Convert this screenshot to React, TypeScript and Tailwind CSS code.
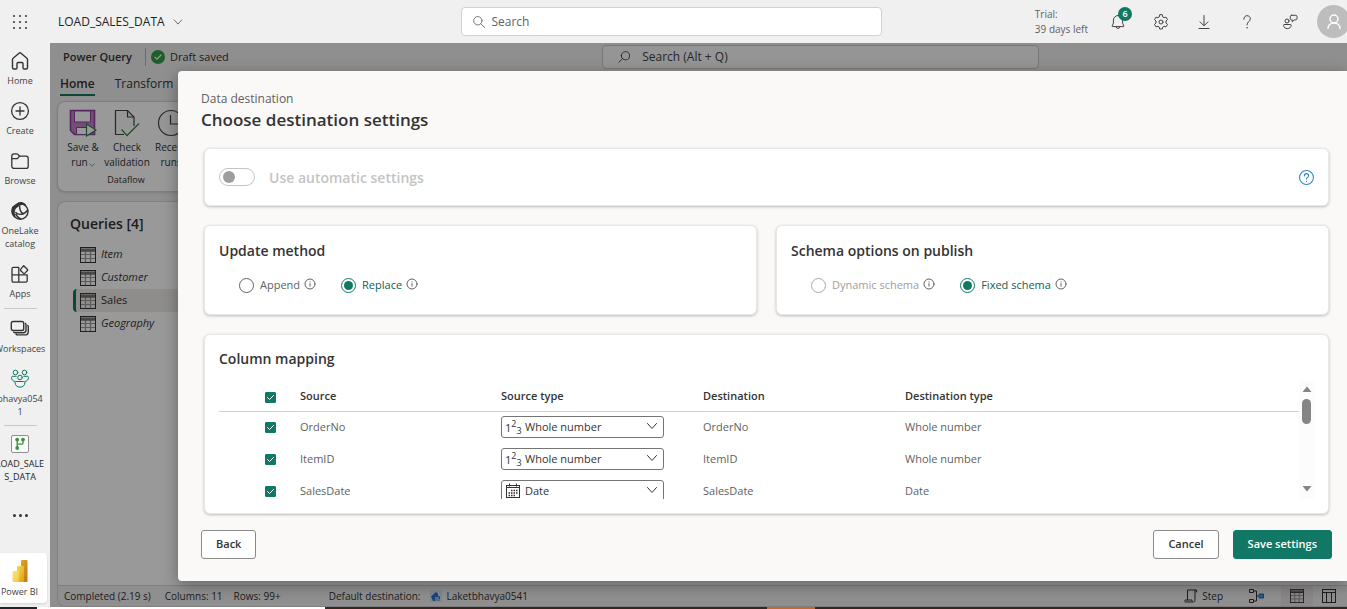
import React from "react";
import type { ReactNode } from "react";

type IconProps = { className?: string };

function Svg({ className = "size-5", box = 20, children }: { className?: string; box?: number; children: ReactNode }) {
  return (
    <svg
      viewBox={`0 0 ${box} ${box}`}
      className={className}
      fill="none"
      stroke="currentColor"
      strokeWidth="1"
      strokeLinecap="round"
      strokeLinejoin="round"
      aria-hidden="true"
    >
      {children}
    </svg>
  );
}

const ChevronDown = ({ className }: IconProps) => (
  <Svg className={className} box={12}>
    <path d="M1.500 3.500 6 8.500l4.500-5" />
  </Svg>
);

const SearchIcon = ({ className }: IconProps) => (
  <Svg className={className} box={16}>
    <circle cx="7" cy="6.500" r="5" />
    <path d="m10.600 10.200 4.400 4.300" />
  </Svg>
);

const HomeIcon = () => (
  <Svg>
    <path strokeWidth="1.400" d="M2.500 8.600c0-.5.2-1 .6-1.300L9 2.200a1.500 1.500 0 0 1 2 0l5.900 5.100c.4.300.6.800.6 1.300v8.200c0 .700-.5 1.200-1.200 1.200h-2.100c-.700 0-1.200-.5-1.200-1.200v-4.300a1 1 0 0 0-1-1H8a1 1 0 0 0-1 1v4.300c0 .700-.5 1.200-1.200 1.200H3.700c-.700 0-1.200-.5-1.200-1.200z" />
  </Svg>
);

const CreateIcon = () => (
  <Svg>
    <circle cx="10" cy="10" r="8.400" strokeWidth="1.300" />
    <path strokeWidth="1.300" d="M10 6v8M6 10h8" />
  </Svg>
);

const BrowseIcon = () => (
  <Svg>
    <path strokeWidth="1.300" d="M1.800 5c0-1.200 1-2.200 2.200-2.200h2.600c.5 0 .9.200 1.200.5l1.700 1.800H16c1.200 0 2.200 1 2.200 2.200v7.900c0 1.200-1 2.200-2.200 2.200H4c-1.200 0-2.200-1-2.200-2.200z" />
    <path strokeWidth="1.300" d="M2 7.700h4.600c.5 0 .9-.2 1.200-.5l1.700-2" />
  </Svg>
);

const OneLakeIcon = () => (
  <Svg>
    <circle cx="10.300" cy="10.500" r="7.700" strokeWidth="1.400" />
    <path
      fill="currentColor"
      stroke="none"
      d="M6.800 2.400C8.600 1 11 .7 13 1.500c1.600.6 2.800 1.600 3.500 2.900-2.200-1-4.800-.9-7 .4L6.200 7.200c-1.400 1.600-1.900 4-1.200 6.600l.6 3.400C2.800 15.600 1.300 13 1.200 10.200c0-1.800.5-3.400 1.300-4.700z"
    />
    <path strokeWidth="1.400" d="M9.700 5.200c-.2 3 .9 5.800 3.600 7.800M5.800 11.500c2.500 3 8.500 2.600 12-2.500M5.800 13.500c1 1.500 2.500 3.200 4.600 4.300" />
  </Svg>
);

const AppsIcon = () => (
  <Svg>
    <path strokeWidth="1.300" d="M2 4.800c0-.8.600-1.400 1.400-1.400h5.400v14.800H3.400c-.8 0-1.400-.6-1.400-1.400zM2 10.800h15.200v6c0 .8-.6 1.400-1.400 1.400H8.800" />
    <path strokeWidth="1.300" d="m13.700 1.700 3.800 3.800c.3.300.3.700 0 1l-2.900 2.900c-.3.300-.8.300-1.100 0l-2.900-2.900a.8.800 0 0 1 0-1.100z" />
  </Svg>
);

const WorkspacesIcon = () => (
  <Svg>
    <rect x="1.300" y="2.500" width="12.400" height="9" rx="1.800" strokeWidth="1.400" />
    <path strokeWidth="1.400" d="M15.500 4.400c.3.400.5.900.5 1.400V11c0 1.700-1 2.700-2.700 2.700H5.200c-.6 0-1.100-.2-1.500-.5M17.800 6.400c.3.400.5.900.5 1.400v4.600c0 2.100-1.400 3.500-3.500 3.500H7.600c-.6 0-1.100-.2-1.500-.5" />
  </Svg>
);

const TeamIcon = () => (
  <Svg className="size-5 text-[#117865]">
    <circle cx="5.500" cy="3.500" r="2.300" />
    <circle cx="14.500" cy="3.500" r="2.300" />
    <circle cx="10" cy="8.500" r="2.300" />
    <path d="M6.200 7.300H2.700c-.7 0-1.200.5-1.200 1.200 0 2 1.200 3.700 3.400 4M13.800 7.300h3.500c.7 0 1.200.5 1.200 1.200 0 2-1.200 3.700-3.400 4M6.300 12.500h7.400c.7 0 1.200.5 1.200 1.200 0 2.600-2 4.500-4.900 4.500s-4.900-1.900-4.900-4.500c0-.7.5-1.200 1.200-1.200z" />
  </Svg>
);

const DataflowIcon = () => (
  <Svg>
    <rect x="1.500" y="1.500" width="17" height="17" rx="1.500" fill="#fafafa" stroke="#8f8f8f" />
    <path stroke="#3f9142" strokeWidth="1.300" d="M7.200 6v8M13 6v3c0 .7-.5 1.200-1.200 1.200H7.200" />
    <g fill="#3f9142" stroke="none">
      <circle cx="7.200" cy="5.600" r="1.900" />
      <circle cx="13" cy="5.600" r="1.900" />
      <circle cx="7.200" cy="14" r="1.900" />
    </g>
  </Svg>
);

const PowerBiIcon = () => (
  <svg viewBox="0 0 20 24" className="h-6 w-5" aria-hidden="true">
    <defs>
      <linearGradient id="pbiBack" x1="0" y1="0" x2="1" y2="1">
        <stop offset="0" stopColor="#e3a82b" />
        <stop offset="1" stopColor="#b87710" />
      </linearGradient>
      <linearGradient id="pbiMid" x1="0" y1="0" x2="1" y2="1">
        <stop offset="0" stopColor="#f6d751" />
        <stop offset="1" stopColor="#dfa012" />
      </linearGradient>
      <linearGradient id="pbiFront" x1="0" y1="0" x2="1" y2="1">
        <stop offset="0" stopColor="#f9e589" />
        <stop offset="1" stopColor="#f0c93c" />
      </linearGradient>
    </defs>
    <rect x="11" y="1" width="6.500" height="22" rx="1" fill="url(#pbiBack)" />
    <path d="M7 8a1 1 0 0 1 1-1h5a1 1 0 0 1 1 1v15H7z" fill="url(#pbiMid)" />
    <path d="M2.500 13a1 1 0 0 1 1-1H8a1 1 0 0 1 1 1v10H3.500a1 1 0 0 1-1-1z" fill="url(#pbiFront)" />
  </svg>
);

const WaffleIcon = () => (
  <svg viewBox="0 0 16 16" className="size-4" fill="#444" aria-hidden="true">
    {[2, 8, 14].map((y) => [2, 8, 14].map((x) => <circle key={`${x}-${y}`} cx={x} cy={y} r="1.100" />))}
  </svg>
);

const BellIcon = () => (
  <Svg className="size-4" box={16}>
    <path d="M8 1.500a4.600 4.600 0 0 0-4.600 4.600v3L2.100 12c-.1.300.1.600.4.600h11c.3 0 .5-.3.400-.6l-1.300-2.900v-3A4.600 4.600 0 0 0 8 1.500zM6.200 12.700a1.800 1.800 0 0 0 3.600 0" />
  </Svg>
);

const GearIcon = () => (
  <Svg className="size-4" box={16}>
    <circle cx="8" cy="8" r="2" />
    <path d="m6.700 1-.4 1.900-1.400.8-1.900-.6L1.500 5.600 3 7v2l-1.500 1.400L3 12.900l1.900-.6 1.400.8.4 1.900h2.600l.4-1.900 1.400-.8 1.900.6 1.500-2.500L13 9V7l1.500-1.400L13 3.100l-1.900.6-1.400-.8L9.300 1z" />
  </Svg>
);

const DownloadIcon = () => (
  <Svg className="size-4" box={16}>
    <path d="M8 1.500v10M4 7.800l4 4 4-4M3 14.500h10" />
  </Svg>
);

const HelpIcon = () => (
  <Svg className="size-4" box={16}>
    <path d="M4.800 5.300c0-2.100 1.400-3.600 3.300-3.600s3.200 1.400 3.200 3.200C11.300 7.500 8 7.700 8 10.800" />
    <circle cx="8" cy="13.800" r=".4" fill="currentColor" strokeWidth=".5" />
  </Svg>
);

const FeedbackIcon = () => (
  <Svg className="size-4" box={16}>
    <circle cx="5" cy="7" r="2" />
    <path d="M2.500 10.500h6c.5 0 .8.400.7.900-.3 2-1.700 3.200-3.900 3.200-2.100 0-3.500-1.200-3.800-3.200-.1-.5.300-.9 1-.900zM9.500 1.300h4.300c.7 0 1.200.5 1.200 1.200v2.200c0 .7-.5 1.200-1.200 1.200h-1.500l-2 1.900V5.900h-.8c-.7 0-1.200-.5-1.200-1.200V2.500c0-.7.500-1.200 1.200-1.200z" />
  </Svg>
);

const PersonIcon = () => (
  <Svg className="size-5" box={20}>
    <circle cx="10" cy="7" r="4" strokeWidth="1.400" />
    <path strokeWidth="1.400" d="M4 16.500c0-3.300 2.500-5.500 6-5.500s6 2.200 6 5.500" />
  </Svg>
);

const InfoIcon = () => (
  <Svg className="size-3 text-[#616161]" box={12}>
    <circle cx="6" cy="6" r="5" />
    <path strokeLinecap="butt" d="M6 5.200v3.300M6 3.300v1" />
  </Svg>
);

const GridIcon = ({ className = "size-4" }: IconProps) => (
  <Svg className={className} box={16}>
    <path stroke="#999" strokeLinecap="butt" strokeWidth="1.200" d="M1 7.500h14M1 11.500h14M5.500 4v12M10.500 4v12" />
    <path stroke="#777" strokeWidth="2" strokeLinecap="butt" d="M1 2.500h14" />
    <path strokeLinecap="butt" d="M1 4h14" />
    <rect x=".5" y=".5" width="15" height="15" strokeLinejoin="miter" />
  </Svg>
);

const ColumnsIcon = () => (
  <Svg className="size-4" box={16}>
    <rect x="1.500" y="1.500" width="13" height="13" strokeLinejoin="miter" />
    <path strokeLinecap="butt" d="M1 4.500h14M5.500 4v11M10.500 4v11" />
  </Svg>
);

const SaveRunIcon = () => (
  <svg viewBox="0 0 28 28" className="size-7" aria-hidden="true">
    <path d="M1.500 1.500h24v24h-20l-4-4z" fill="#c084c9" stroke="#8f3f9c" strokeWidth="1.600" />
    <path d="M5.500 2h16v11h-16z" fill="#fff" stroke="#8f3f9c" />
    <path d="M7.500 25.500v-7h10v7z" fill="#fff" stroke="#8f3f9c" />
    <path d="M17.500 15v12l9.500-6z" fill="#fff" stroke="#2c7d46" strokeWidth="1.200" />
  </svg>
);

const CheckFileIcon = () => (
  <svg viewBox="0 0 28 28" className="size-7" fill="none" aria-hidden="true">
    <path d="M11 25.500H2.500v-24h12l6.500 6.500v9" fill="#fafafa" stroke="#444" strokeWidth="1.200" />
    <path d="M14.500 1.500V8H21" stroke="#444" strokeWidth="1.200" />
    <path d="m8.500 20.500 5.500 6 12-12" stroke="#2c8a46" strokeWidth="1.300" />
  </svg>
);

const ClockIcon = () => (
  <svg viewBox="0 0 28 28" className="size-7" fill="none" stroke="#444" strokeWidth="1.200" aria-hidden="true">
    <circle cx="14" cy="14" r="12.500" fill="#fafafa" />
    <path d="M13.500 6v9H21" />
  </svg>
);

const CalendarIcon = () => (
  <Svg className="size-4 text-[#333]" box={16}>
    <rect x="1.500" y="2.500" width="13" height="12" strokeLinejoin="miter" />
    <path strokeLinecap="butt" d="M1 4.500h14M4.500 .5v3M11.500 .5v3" />
    <path strokeLinecap="butt" strokeWidth="1.500" strokeDasharray="1.500 1" d="M6 7.500h7M3.500 10h9.500M3.500 12.500h7" />
  </Svg>
);

function NavItem({ icon, label, strong = false }: { icon: ReactNode; label: string; strong?: boolean }) {
  return (
    <a
      href="#"
      className={`flex w-[50px] flex-col items-center gap-[3px] text-center text-[9px] leading-[13px] ${
        strong ? "text-[#242424]" : "text-[#424242]"
      }`}
    >
      <span className="text-[#333]">{icon}</span>
      <span className="whitespace-pre">{label}</span>
    </a>
  );
}

function Sidebar() {
  return (
    <aside className="flex w-[50px] shrink-0 flex-col overflow-hidden bg-[#f0f0f0] pb-1">
      <nav aria-label="Main" className="flex w-10 flex-col items-center">
        <div className="flex flex-col items-center gap-[14px] pt-2 pb-2">
          <NavItem icon={<HomeIcon />} label="Home" />
          <NavItem icon={<CreateIcon />} label="Create" />
          <NavItem icon={<BrowseIcon />} label="Browse" />
          <NavItem icon={<OneLakeIcon />} label={"OneLake\ncatalog"} />
          <NavItem icon={<AppsIcon />} label="Apps" />
        </div>
        <hr className="w-[33px] border-[#c8c8c8]" />
        <div className="flex flex-col items-center gap-[14px] pt-[10px] pb-[7px]">
          <NavItem icon={<WorkspacesIcon />} label="Workspaces" />
          <NavItem icon={<TeamIcon />} label={"bhavya054\n1"} />
        </div>
        <hr className="w-[33px] border-[#c8c8c8]" />
        <div className="pt-2">
          <NavItem strong icon={<DataflowIcon />} label={"LOAD_SALE\nS_DATA"} />
        </div>
        <button type="button" aria-label="More" className="mt-6 flex h-4 items-center gap-[3px]">
          <i className="size-[3px] rounded-full bg-[#333]" />
          <i className="size-[3px] rounded-full bg-[#333]" />
          <i className="size-[3px] rounded-full bg-[#333]" />
        </button>
      </nav>
      <a
        href="#"
        className="mt-auto mr-[3px] flex flex-col items-center gap-[2px] rounded-r bg-white pt-[6px] pb-[5px] pr-2 text-[9px] leading-[13px] text-[#424242] shadow"
      >
        <PowerBiIcon />
        Power BI
      </a>
    </aside>
  );
}

function HeaderButton({ label, children }: { label: string; children: ReactNode }) {
  return (
    <button type="button" aria-label={label} className="relative flex h-8 w-[43px] items-center justify-center text-[#424242]">
      {children}
    </button>
  );
}

function TopBar() {
  return (
    <header className="grid h-[43px] shrink-0 grid-cols-[1fr_421px_1fr] items-center overflow-hidden bg-[#f0f0f0] pr-1">
      <div className="flex items-center">
        <button type="button" aria-label="App launcher" className="flex w-10 justify-center">
          <WaffleIcon />
        </button>
        <button type="button" className="ml-[18px] flex items-center gap-2 text-[12px] text-[#242424]">
          LOAD_SALES_DATA
          <ChevronDown className="size-[10px] text-[#555]" />
        </button>
      </div>
      <label className="flex h-[29px] items-center gap-1 rounded border border-[#d1d1d1] bg-white px-[10px]">
        <SearchIcon className="size-[14px] text-[#616161]" />
        <input
          type="search"
          aria-label="Search"
          placeholder="Search"
          className="w-full bg-transparent pl-[2px] text-[12px] outline-none placeholder:text-[#616161]"
        />
      </label>
      <div className="flex items-center justify-end">
        <p className="text-[10px] leading-[15px] text-[#616161]">
          Trial:
          <br />
          39 days left
        </p>
        <div className="ml-2 flex">
          <HeaderButton label="Notifications">
            <BellIcon />
            <span className="absolute top-[1px] right-[7px] flex size-[14px] items-center justify-center rounded-full bg-[#117865] text-[9px] font-semibold text-white">
              6
            </span>
          </HeaderButton>
          <HeaderButton label="Settings">
            <GearIcon />
          </HeaderButton>
          <HeaderButton label="Downloads">
            <DownloadIcon />
          </HeaderButton>
          <HeaderButton label="Help">
            <HelpIcon />
          </HeaderButton>
          <HeaderButton label="Feedback">
            <FeedbackIcon />
          </HeaderButton>
        </div>
        <button
          type="button"
          aria-label="Account"
          className="-mr-[7px] ml-[6px] flex size-[33px] shrink-0 items-center justify-center rounded-full bg-[#bdbdbd] text-white"
        >
          <PersonIcon />
        </button>
      </div>
    </header>
  );
}

const queries = [
  { name: "Item", selected: false },
  { name: "Customer", selected: false },
  { name: "Sales", selected: true },
  { name: "Geography", selected: false },
];

function RibbonButton({ icon, children }: { icon: ReactNode; children: ReactNode }) {
  return (
    <button type="button" className="flex w-11 flex-col items-center gap-[3px] text-[10px] leading-[15px] whitespace-nowrap">
      {icon}
      <span>{children}</span>
    </button>
  );
}

function PowerQuery() {
  return (
    <div className="flex h-full flex-col bg-[#f0eeee] pl-[7px] text-[#333]">
      <div className="flex h-[27px] shrink-0 items-center">
        <div className="flex w-[545px] shrink-0 items-center pt-px pl-[6px]">
          <span className="text-[11px] font-semibold">Power Query</span>
          <span className="ml-[13px] h-[18px] w-px bg-[#b5b5b5]" />
          <span className="ml-[5px] flex size-[14px] items-center justify-center rounded-full bg-[#2f9e44] text-white">
            <Svg className="size-[10px]" box={10}>
              <path strokeWidth="1.200" d="m2 5.200 2 2 4-4.200" />
            </Svg>
          </span>
          <span className="ml-[5px] text-[11px]">Draft saved</span>
        </div>
        <label className="flex h-6 w-[437px] items-center gap-[11px] rounded border border-[#c9c7c7] bg-[#fbf9f9] pl-[15px]">
          <SearchIcon className="size-[14px] -scale-x-100" />
          <input
            type="search"
            aria-label="Search commands"
            placeholder="Search (Alt + Q)"
            className="w-full bg-transparent text-[12px] outline-none placeholder:text-[#444]"
          />
        </label>
      </div>
      <div className="flex h-[31px] shrink-0 gap-5 pt-[3px] pl-[3px] text-[12px] leading-[20px]">
        <button type="button" className="h-[23px] border-b-2 border-[#117865] font-semibold">
          Home
        </button>
        <button type="button" className="h-[23px] border-b-2 border-transparent">
          Transform
        </button>
      </div>
      <section className="flex h-[91px] shrink-0 flex-col rounded-l-lg border border-r-0 border-[#d5d3d3] bg-white pt-[7px] pl-[3px] shadow">
        <div className="flex">
          <RibbonButton icon={<SaveRunIcon />}>
            Save &amp;
            <br />
            <span className="inline-flex items-center">
              run
              <ChevronDown className="mt-1 ml-px size-[6px]" />
            </span>
          </RibbonButton>
          <RibbonButton icon={<CheckFileIcon />}>
            Check
            <br />
            validation
          </RibbonButton>
          <RibbonButton icon={<ClockIcon />}>
            Recent
            <br />
            runs
          </RibbonButton>
        </div>
        <p className="w-[130px] pt-[3px] text-center text-[9px] leading-[13px]">Dataflow</p>
      </section>
      <section className="mt-[9px] flex min-h-0 flex-1 flex-col rounded-l-lg border border-r-0 border-[#d5d3d3] bg-white">
        <h2 className="pt-[13px] pb-[10px] pl-3 text-[14px] leading-[18px] font-semibold">Queries [4]</h2>
        <ul className="flex-1">
          {queries.map((query) => (
            <li
              key={query.name}
              className={`ml-[15px] flex h-[23px] items-center gap-[5px] rounded-l text-[11px] ${
                query.selected ? "border-l-[3px] border-[#117865] bg-[#edebe9] pl-1" : "pl-[7px] italic"
              }`}
            >
              <GridIcon />
              {query.name}
            </li>
          ))}
        </ul>
        <footer className="flex h-[21px] items-center rounded-bl-lg border-t border-[#d5d3d3] bg-[#f0eeee] pl-[6px] text-[10px]">
          <span>Completed (2.19 s)</span>
          <span className="ml-[14px]">Columns: 11</span>
          <span className="ml-[11px]">Rows: 99+</span>
          <span className="ml-12">Default destination:</span>
          <svg viewBox="0 0 12 12" className="mr-1 ml-[10px] size-3" aria-hidden="true">
            <rect width="12" height="12" rx="1" fill="#d6e0f0" />
            <path d="M1 6.500 6 2l2 2v2l2 .5V11H3z" fill="#2f6fd0" />
            <path d="M5 8h4M5 10h5" stroke="#fff" />
          </svg>
          <span>Laketbhavya0541</span>
          <div className="ml-auto flex h-full items-center pr-[10px]">
            <Svg className="mr-1 size-[14px]" box={14}>
              <path d="M3.500 11V1h9v2M11 1v10c0 1-.5 2-1.500 2h-8c-1 0-1-2 0-2H8v1" />
            </Svg>
            <span>Step</span>
            <Svg className="ml-[25px] size-4" box={16}>
              <path strokeLinecap="butt" d="M1.500 1.500h4v3h-4zM1.500 11.500h4v3h-4zM5.500 3h3v10h-3M8.500 8h3" />
              <rect x="11.500" y="6" width="4" height="4" fill="#4d9be0" stroke="#1669b5" />
            </Svg>
            <span className="ml-[17px] flex h-full w-8 items-center justify-center bg-[#e4e2e2]">
              <GridIcon className="size-[14px]" />
            </span>
            <span className="ml-2">
              <ColumnsIcon />
            </span>
          </div>
        </footer>
      </section>
    </div>
  );
}

function Card({ className = "", children }: { className?: string; children: ReactNode }) {
  return (
    <section className={`rounded-md border border-[#e8e8e8] bg-white px-[14px] shadow-[0_1px_3px_rgba(0,0,0,0.25)] ${className}`}>
      {children}
    </section>
  );
}

function Radio({ name, label, checked = false, disabled = false }: { name: string; label: string; checked?: boolean; disabled?: boolean }) {
  return (
    <div className="flex items-center gap-1">
      <label
        className={`flex items-center gap-[6px] text-[11px] leading-[16px] ${
          checked ? "text-[#0e6152]" : disabled ? "text-[#9e9e9e]" : "text-[#616161]"
        }`}
      >
        <input
          type="radio"
          name={name}
          defaultChecked={checked}
          disabled={disabled}
          className="size-[15px] appearance-none rounded-full border border-[#616161] bg-white bg-clip-content p-[2px] checked:border-[#117865] checked:bg-[#117865] disabled:border-[#a8a8a8]"
        />
        {label}
      </label>
      <span className="pb-[3px]">
        <InfoIcon />
      </span>
    </div>
  );
}

function Tick({ label }: { label: string }) {
  return (
    <span className="grid size-[11px] place-items-center">
      <input
        type="checkbox"
        defaultChecked
        aria-label={label}
        className="peer col-start-1 row-start-1 size-[11px] appearance-none rounded-[1px] border border-[#616161] checked:border-[#117865] checked:bg-[#117865]"
      />
      <Svg className="pointer-events-none col-start-1 row-start-1 hidden size-[9px] text-white peer-checked:block" box={9}>
        <path d="m1.500 4.500 2 2 4-4" />
      </Svg>
    </span>
  );
}

const columns = [
  { name: "OrderNo", type: "Whole number" },
  { name: "ItemID", type: "Whole number" },
  { name: "SalesDate", type: "Date" },
];

function TypeSelect({ name, type }: { name: string; type: string }) {
  return (
    <div className="relative h-[22px] w-[163px] text-[#333]">
      <span className="pointer-events-none absolute inset-y-0 left-1 flex items-center">
        {type === "Date" ? (
          <CalendarIcon />
        ) : (
          <span className="text-[11px] leading-none">
            1<sup className="text-[9px]">2</sup>
            <sub className="text-[9px]">3</sub>
          </span>
        )}
      </span>
      <select
        aria-label={`Source type of ${name}`}
        defaultValue={type}
        className="h-full w-full appearance-none rounded-[3px] border border-[#757575] bg-transparent pl-[23px] text-[11px] leading-[16px]"
      >
        <option>Whole number</option>
        <option>Date</option>
      </select>
      <ChevronDown className="pointer-events-none absolute top-1 right-[6px] size-3" />
    </div>
  );
}

function ColumnMapping() {
  return (
    <div className="flex h-[118px]">
      <div className="min-w-0 flex-1 overflow-y-auto [scrollbar-width:none]">
        <table className="w-full table-fixed text-left text-[11px] leading-[16px] text-[#616161]">
          <thead className="text-[#333]">
            <tr className="h-[30px] border-b border-[#d1d1d1]">
              <th className="w-[81px] pt-1 pl-[46px]">
                <Tick label="Select all columns" />
              </th>
              <th className="w-[201px] font-semibold">Source</th>
              <th className="w-[202px] font-semibold">Source type</th>
              <th className="w-[202px] font-semibold">Destination</th>
              <th className="font-semibold">Destination type</th>
            </tr>
          </thead>
          <tbody>
            {columns.map((column) => (
              <tr key={column.name} className="h-8">
                <td className="pl-[46px]">
                  <Tick label={`Include ${column.name}`} />
                </td>
                <td>{column.name}</td>
                <td>
                  <TypeSelect name={column.name} type={column.type} />
                </td>
                <td>{column.name}</td>
                <td>{column.type}</td>
              </tr>
            ))}
          </tbody>
        </table>
      </div>
      <div className="flex w-[15px] flex-col items-center bg-[#fcfcfc] pt-[5px] pb-[7px] text-[#858585]" aria-hidden="true">
        <svg viewBox="0 0 10 6" className="h-[6px] w-[10px]" fill="currentColor">
          <path d="M5 0.500 9.500 6h-9z" />
        </svg>
        <span className="mt-[7px] h-[25px] w-[9px] rounded-full bg-[#858585]" />
        <svg viewBox="0 0 10 6" className="mt-auto h-[6px] w-[10px]" fill="currentColor">
          <path d="M5 5.500 0.500 0h9z" />
        </svg>
      </div>
    </div>
  );
}

function DestinationDialog() {
  return (
    <div
      role="dialog"
      aria-modal="true"
      aria-labelledby="dialog-title"
      className="absolute top-7 right-0 bottom-[26px] left-[128px] overflow-hidden rounded-l bg-[#faf9f8] pt-5 pr-[15px] pl-[23px] text-[#333] shadow-[0_4px_16px_rgba(0,0,0,0.35)]"
    >
      <p className="text-[12px] leading-[16px] text-[#616161]">Data destination</p>
      <h1 id="dialog-title" className="text-[17px] leading-[26px] font-semibold">
        Choose destination settings
      </h1>
      <div className="mx-[3px] mt-[15px] flex flex-col gap-[19px]">
        <Card className="flex h-[58px] items-center">
          <label className="flex items-center gap-[14px] text-[14px] font-semibold text-[#c4c4c4]">
            <input
              type="checkbox"
              role="switch"
              disabled
              className="h-[18px] w-9 appearance-none rounded-full border border-[#c4c4c4] before:ml-[3px] before:mt-[2px] before:block before:size-3 before:rounded-full before:bg-[#9e9e9e]"
            />
            Use automatic settings
          </label>
          <button type="button" aria-label="Help" className="ml-auto text-[#2b88c8]">
            <Svg className="size-[15px]" box={14}>
              <circle cx="7" cy="7" r="6.500" />
              <path d="M5 5.500c0-1.300.8-2.100 2-2.100s2 .8 2 1.900C9 6.900 7 6.900 7 8.500M7 10.500v.1" />
            </Svg>
          </button>
        </Card>
        <div className="grid grid-cols-2 gap-[19px]">
          <Card className="h-[90px] pt-[15px]">
            <h2 className="text-[14px] leading-[20px] font-semibold">Update method</h2>
            <div className="mt-4 flex gap-[25px] pl-5">
              <Radio name="update" label="Append" />
              <Radio name="update" label="Replace" checked />
            </div>
          </Card>
          <Card className="h-[90px] pt-[15px]">
            <h2 className="text-[14px] leading-[20px] font-semibold">Schema options on publish</h2>
            <div className="mt-4 flex gap-[25px] pl-5">
              <Radio name="schema" label="Dynamic schema" disabled />
              <Radio name="schema" label="Fixed schema" checked />
            </div>
          </Card>
        </div>
        <Card className="h-[180px] pt-[14px]">
          <h2 className="pb-3 text-[14px] leading-[20px] font-semibold">Column mapping</h2>
          <ColumnMapping />
        </Card>
      </div>
      <div className="mt-4 flex gap-[14px] text-[11px] font-semibold">
        <button type="button" className="mr-auto h-[29px] rounded-[3px] border border-[#8a8a8a] bg-white px-[14px]">
          Back
        </button>
        <button type="button" className="h-[29px] rounded-[3px] border border-[#8a8a8a] bg-white px-[14px]">
          Cancel
        </button>
        <button type="button" className="h-[29px] rounded-[3px] border border-[#117865] bg-[#117865] px-[14px] text-white">
          Save settings
        </button>
      </div>
    </div>
  );
}

export default function App() {
  return (
    <div className="flex h-screen flex-col overflow-hidden bg-[#f0f0f0] font-['Open_Sans','Noto_Sans',sans-serif]">
      <TopBar />
      <div className="flex min-h-0 flex-1">
        <Sidebar />
        <main className="relative min-w-0 flex-1">
          <PowerQuery />
          <div className="absolute inset-0 bg-black/40" />
          <DestinationDialog />
        </main>
      </div>
      <div className="flex h-[2px] shrink-0" aria-hidden="true">
        <span className="w-[37px] bg-[#20252b]" />
        <span className="w-[288px] bg-white" />
        <span className="w-[442px] bg-[#33261f]" />
        <span className="w-12 bg-[#c8692c]" />
        <span className="flex-1 bg-[#33261f]" />
      </div>
    </div>
  );
}
